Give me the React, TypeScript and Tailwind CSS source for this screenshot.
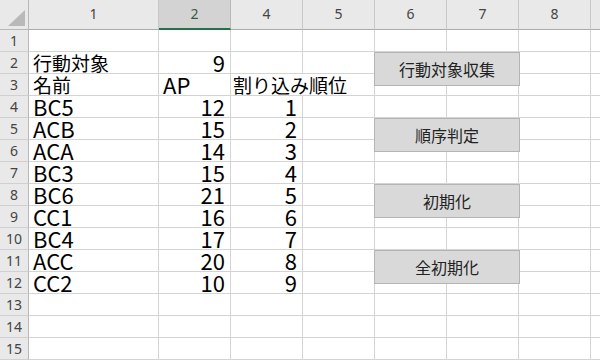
const colWidths = ["w-[130px]", "w-[72px]", "w-[72px]", "w-[72px]", "w-[72px]", "w-[72px]", "w-[72px]", "w-[72px]"];
const colLabels = ["1", "2", "4", "5", "6", "7", "8", ""];

type Row = { name?: string; ap?: string; rank?: string; kind?: "title" | "head" | "data" };

const rows: Row[] = [
  {},
  { kind: "title", name: "行動対象", ap: "9" },
  { kind: "head", name: "名前", ap: "AP", rank: "割り込み順位" },
  { kind: "data", name: "BC5", ap: "12", rank: "1" },
  { kind: "data", name: "ACB", ap: "15", rank: "2" },
  { kind: "data", name: "ACA", ap: "14", rank: "3" },
  { kind: "data", name: "BC3", ap: "15", rank: "4" },
  { kind: "data", name: "BC6", ap: "21", rank: "5" },
  { kind: "data", name: "CC1", ap: "16", rank: "6" },
  { kind: "data", name: "BC4", ap: "17", rank: "7" },
  { kind: "data", name: "ACC", ap: "20", rank: "8" },
  { kind: "data", name: "CC2", ap: "10", rank: "9" },
  {},
  {},
  {},
];

const buttons = [
  { label: "行動対象収集", top: "top-[52px]" },
  { label: "順序判定", top: "top-[118px]" },
  { label: "初期化", top: "top-[184px]" },
  { label: "全初期化", top: "top-[250px]" },
];

const cjk = "font-['Noto_Sans_CJK_JP',sans-serif] text-[19px] leading-[21px]";
const latin = "font-['Noto_Sans_CJK_JP',sans-serif] text-[22px] leading-[21px]";
const grid = "h-[22px] shrink-0 border-r border-b border-[#d4d4d4] whitespace-nowrap overflow-visible";

function SheetRow({ row, index }: { row: Row; index: number }) {
  const isHead = row.kind === "head";
  const nameFont = row.kind === "data" ? latin : cjk;
  return (
    <div className="flex">
      <div className="w-[29px] h-[22px] shrink-0 bg-[#e9e9e9] border-r border-b border-r-[#b8b8b8] border-b-[#d0d0d0] text-center text-[14px] leading-[21px] text-[#444] font-['Noto_Sans',sans-serif]">
        {index + 1}
      </div>
      <div className={`${grid} w-[130px] pl-[4px] text-black ${nameFont}`}>{row.name}</div>
      <div
        className={`${grid} w-[72px] px-[5px] text-black ${latin} ${isHead ? "text-left pl-[4px]" : "text-right"}`}
      >
        {row.ap}
      </div>
      {isHead ? (
        <div className={`${grid} w-[144px] pl-[2px] text-black ${cjk}`}>{row.rank}</div>
      ) : (
        <>
          <div className={`${grid} w-[72px] px-[5px] text-right text-black ${latin}`}>{row.rank}</div>
          <div className={`${grid} w-[72px]`} />
        </>
      )}
      <div className={`${grid} w-[72px]`} />
      <div className={`${grid} w-[72px]`} />
      <div className={`${grid} w-[72px]`} />
      <div className={`${grid} w-[72px]`} />
    </div>
  );
}

export default function App() {
  return (
    <div className="relative w-[600px] h-[360px] overflow-hidden bg-white">
      <div className="flex">
        <div className="relative w-[29px] h-[30px] shrink-0 bg-[#e9e9e9] border-r border-b border-[#b8b8b8]">
          <svg className="absolute left-[8px] top-[10px]" width="17" height="16" viewBox="0 0 17 16">
            <polygon points="17,0 17,16 0,16" fill="#b9b9b9" />
          </svg>
        </div>
        {colLabels.map((label, i) =>
          i === 1 ? (
            <div
              key={i}
              className={`${colWidths[i]} h-[30px] shrink-0 bg-[#d3d3d3] border-r border-[#b8b8b8] border-b-2 border-b-[#217346] text-center text-[14px] leading-[28px] text-[#3b5a45] font-['Noto_Sans',sans-serif]`}
            >
              {label}
            </div>
          ) : (
            <div
              key={i}
              className={`${colWidths[i]} h-[30px] shrink-0 bg-[#e9e9e9] border-r border-r-[#c8c8c8] border-b border-b-[#ababab] text-center text-[14px] leading-[28px] text-[#444] font-['Noto_Sans',sans-serif]`}
            >
              {label}
            </div>
          )
        )}
      </div>
      {rows.map((row, i) => (
        <SheetRow key={i} row={row} index={i} />
      ))}
      {buttons.map((b) => (
        <div
          key={b.label}
          className={`absolute left-[374px] ${b.top} w-[146px] h-[34px] flex items-center justify-center bg-[#d9d9d9] border border-[#b4b4b4] text-[16px] text-[#222] font-['Noto_Sans_CJK_JP',sans-serif]`}
        >
          {b.label}
        </div>
      ))}
    </div>
  );
}
